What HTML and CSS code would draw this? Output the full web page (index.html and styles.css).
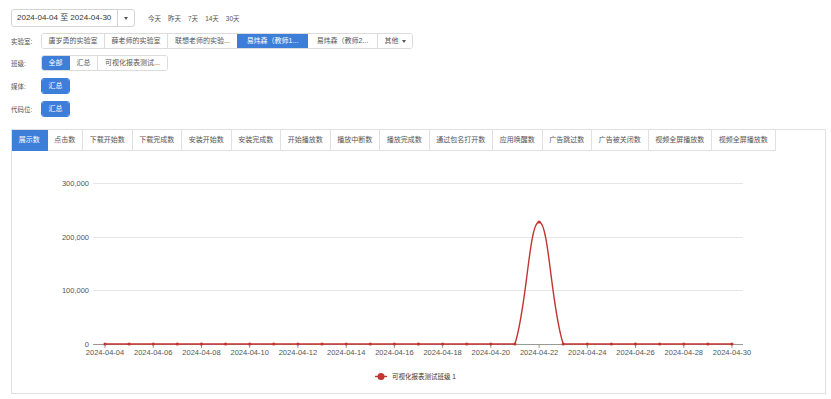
FILE: index.html
```html
<!DOCTYPE html>
<html>
    <head>
        <meta charset="UTF-8">
        <title>报表</title>
        <link rel="stylesheet" href="styles.css">
    </head>
    <body>
        <div class="dateRow">
            <div class="datePicker">
                <span class="dateText">2024-04-04 至 2024-04-30</span>
                <span class="dateDrop"><i class="caret"></i></span>
            </div>
            <span class="quick">
                <a>今天</a><a>昨天</a><a>7天</a><a>14天</a><a>30天</a>
            </span>
        </div>

        <div class="filterRow">
            <span class="filterLabel">实验室:</span>
            <span class="btnGroup">
                <button>唐岁勇的实验室</button>
                <button>薛老师的实验室</button>
                <button class="cut">联想老师的实验...</button>
                <button class="cut on">易炜森（教师1...</button>
                <button class="cut">易炜森（教师2...</button>
                <button class="more">其他 <i class="caret"></i></button>
            </span>
        </div>
        <div class="filterRow">
            <span class="filterLabel">班级:</span>
            <span class="btnGroup">
                <button class="on">全部</button>
                <button>汇总</button>
                <button class="cut">可视化报表测试...</button>
            </span>
        </div>
        <div class="filterRow gapBig">
            <span class="filterLabel">媒体:</span>
            <span class="btnGroup solo"><button class="on">汇总</button></span>
        </div>
        <div class="filterRow gapBig">
            <span class="filterLabel">代码位:</span>
            <span class="btnGroup solo"><button class="on">汇总</button></span>
        </div>

        <div class="panel">
            <div class="tabs">
                <span class="tab on">展示数</span>
                <span class="tab">点击数</span>
                <span class="tab">下载开始数</span>
                <span class="tab">下载完成数</span>
                <span class="tab">安装开始数</span>
                <span class="tab">安装完成数</span>
                <span class="tab">开始播放数</span>
                <span class="tab">播放中断数</span>
                <span class="tab">播放完成数</span>
                <span class="tab">通过包名打开数</span>
                <span class="tab">应用唤醒数</span>
                <span class="tab">广告跳过数</span>
                <span class="tab">广告被关闭数</span>
                <span class="tab">视频全屏播放数</span>
                <span class="tab">视频全屏播放数</span>
            </div>
            <svg class="chart" width="813" height="242" viewBox="0 0 813 242">
                <defs>
                    <marker id="dot" markerUnits="userSpaceOnUse" markerWidth="4" markerHeight="4"
                            refX="2" refY="2" viewBox="0 0 4 4">
                        <circle cx="2" cy="2" r="1.6" fill="#c23531"/>
                    </marker>
                </defs>
                <g class="grid">
                    <line x1="81" y1="32.5" x2="731" y2="32.5"/>
                    <line x1="81" y1="86.5" x2="731" y2="86.5"/>
                    <line x1="81" y1="139.5" x2="731" y2="139.5"/>
                </g>
                <g class="axis">
                    <line x1="81" y1="193.5" x2="731" y2="193.5"/>
                    <line x1="93" y1="193" x2="93" y2="197"/>
                    <line x1="141.2" y1="193" x2="141.2" y2="197"/>
                    <line x1="189.5" y1="193" x2="189.5" y2="197"/>
                    <line x1="237.7" y1="193" x2="237.7" y2="197"/>
                    <line x1="285.9" y1="193" x2="285.9" y2="197"/>
                    <line x1="334.2" y1="193" x2="334.2" y2="197"/>
                    <line x1="382.4" y1="193" x2="382.4" y2="197"/>
                    <line x1="430.6" y1="193" x2="430.6" y2="197"/>
                    <line x1="478.8" y1="193" x2="478.8" y2="197"/>
                    <line x1="527.1" y1="193" x2="527.1" y2="197"/>
                    <line x1="575.3" y1="193" x2="575.3" y2="197"/>
                    <line x1="623.5" y1="193" x2="623.5" y2="197"/>
                    <line x1="671.8" y1="193" x2="671.8" y2="197"/>
                    <line x1="720" y1="193" x2="720" y2="197"/>
                </g>
                <g class="yLabels">
                    <text x="77" y="35">300,000</text>
                    <text x="77" y="89">200,000</text>
                    <text x="77" y="142">100,000</text>
                    <text x="77" y="196">0</text>
                </g>
                <g class="xLabels">
                    <text x="93" y="204">2024-04-04</text>
                    <text x="141.2" y="204">2024-04-06</text>
                    <text x="189.5" y="204">2024-04-08</text>
                    <text x="237.7" y="204">2024-04-10</text>
                    <text x="285.9" y="204">2024-04-12</text>
                    <text x="334.2" y="204">2024-04-14</text>
                    <text x="382.4" y="204">2024-04-16</text>
                    <text x="430.6" y="204">2024-04-18</text>
                    <text x="478.8" y="204">2024-04-20</text>
                    <text x="527.1" y="204">2024-04-22</text>
                    <text x="575.3" y="204">2024-04-24</text>
                    <text x="623.5" y="204">2024-04-26</text>
                    <text x="671.8" y="204">2024-04-28</text>
                    <text x="720" y="204">2024-04-30</text>
                </g>
                <path class="series"
                      d="M93,193 L117.1,193 L141.2,193 L165.3,193 L189.5,193 L213.6,193 L237.7,193 L261.8,193
                         L285.9,193 L310,193 L334.2,193 L358.3,193 L382.4,193 L406.5,193 L430.6,193
                         L454.7,193 L478.8,193 L502.9,193
                         C515,156 517,71 527.1,71
                         C537,71 539,156 551.2,193
                         L575.3,193 L599.4,193 L623.5,193 L647.6,193 L671.8,193 L695.9,193 L720,193"/>
                <g class="legend">
                    <line x1="363" y1="225.5" x2="375" y2="225.5"/>
                    <circle cx="369" cy="225.5" r="3.5"/>
                    <text x="380" y="228">可视化报表测试班级 1</text>
                </g>
            </svg>
        </div>
    </body>
</html>
```

FILE: styles.css
```css
* {
    box-sizing: border-box; }

html, body {
    background: #fff;
    margin: 0; padding: 0; }
body {
    padding: 9px 6px 0 11px;
    color: #333;
    font-family: "Liberation Sans", "Noto Sans CJK SC", sans-serif; }

/* date range */
.dateRow {
    display: flex;
    align-items: center;
    height: 18px; }
.datePicker {
    display: flex;
    width: 124px; height: 18px;
    border: 1px solid #d4d4d4;
    border-radius: 3px; }
.dateText {
    flex-grow: 1;
    padding-left: 5px;
    font-size: 8px;
    line-height: 16px;
    color: #333; }
.dateDrop {
    display: flex;
    align-items: center;
    justify-content: center;
    width: 17px;
    border-left: 1px solid #d4d4d4; }
.caret {
    display: inline-block;
    width: 0; height: 0;
    border-left: 2.5px solid transparent;
    border-right: 2.5px solid transparent;
    border-top: 3px solid #555; }
.quick {
    display: flex;
    gap: 7px;
    margin-left: 13px;
    font-size: 6.5px;
    color: #555; }

/* filters */
.filterRow {
    display: flex;
    align-items: center;
    height: 16px;
    margin-top: 6px; }
.filterRow.gapBig { margin-top: 7px; }
.filterLabel {
    width: 30px;
    font-size: 6.5px;
    color: #555; }
.btnGroup {
    display: flex;
    height: 16px;
    border: 1px solid #dcdcdc;
    border-radius: 3px;
    overflow: hidden; }
.btnGroup.solo { border-color: #3d7ed8; }
.btnGroup button {
    margin: 0;
    padding: 0 6.5px;
    border: none;
    border-left: 1px solid #dcdcdc;
    background: #fff;
    color: #555;
    font-family: inherit;
    font-size: 7px;
    line-height: 14px;
    white-space: nowrap; }
.btnGroup button.cut { width: 70px; }
.btnGroup button:first-child { border-left: none; }
.btnGroup button.on {
    background: #3d7ed8;
    color: #fff;
    border-left-color: #3d7ed8; }
.btnGroup button.on + button { border-left-color: #3d7ed8; }
.btnGroup button.more {
    display: flex;
    align-items: center;
    gap: 3px; }

/* chart panel */
.panel {
    width: 815px;
    margin-top: 12px;
    border: 1px solid #e0e0e0; }
.tabs { display: flex; }
.tab {
    padding: 0 6.75px;
    height: 21px;
    line-height: 20px;
    font-size: 7px;
    color: #555;
    border-right: 1px solid #e0e0e0;
    border-bottom: 1px solid #e0e0e0;
    white-space: nowrap; }
.tab.on {
    background: #3d7ed8;
    color: #fff;
    border-color: #3d7ed8; }
.chart { display: block; }
.grid line {
    stroke: #e6e6e6;
    stroke-width: 1; }
.axis line {
    stroke: #999;
    stroke-width: 1; }
.chart text {
    font-family: "Liberation Sans", "Noto Sans CJK SC", sans-serif;
    font-size: 7.5px;
    fill: #555; }
.yLabels text { text-anchor: end; }
.xLabels text { text-anchor: middle; }
.series {
    fill: none;
    stroke: #c23531;
    stroke-width: 1.4;
    marker-start: url(#dot);
    marker-mid: url(#dot);
    marker-end: url(#dot); }
.legend line {
    stroke: #c23531;
    stroke-width: 1.4; }
.legend circle { fill: #c23531; }
.chart .legend text {
    font-size: 6.5px;
    fill: #333; }
```
